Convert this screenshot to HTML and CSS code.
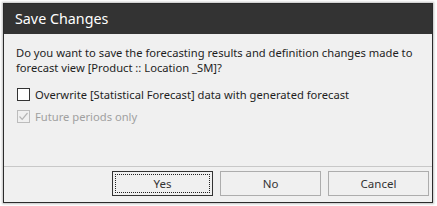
FILE: index.html
```html
<!DOCTYPE html>
<html>
<head>
<meta charset="utf-8">
<link rel="stylesheet" href="styles.css">
</head>
<body>
<div class="window">
  <div class="titlebar">Save Changes</div>
  <div class="content">
    <p class="message">Do you want to save the forecasting results and definition changes made to forecast view [Product :: Location _SM]?</p>
    <div class="option">
      <span class="box"></span>
      <span class="label">Overwrite [Statistical Forecast] data with generated forecast</span>
    </div>
    <div class="option disabled">
      <span class="box"><svg width="11" height="11" viewBox="0 0 11 11"><path d="M1.5 5.5 L4.2 8.3 L9.5 2" fill="none" stroke="#b4b4b4" stroke-width="1.2"/></svg></span>
      <span class="label">Future periods only</span>
    </div>
  </div>
  <div class="footer">
    <button class="btn default"><span class="focus">Yes</span></button>
    <button class="btn">No</button>
    <button class="btn">Cancel</button>
  </div>
</div>
</body>
</html>
```
FILE: styles.css
```css
html, body {
  margin: 0;
  padding: 0;
  background: #ffffff;
}
body {
  font-family: "Noto Sans", "Open Sans", sans-serif;
  font-size: 11.2px;
  color: #1e1e1e;
}
.window {
  margin: 3px;
  width: 430px;
  height: 200px;
  box-sizing: border-box;
  border: 1px solid #2b2b2b;
  box-shadow: 0 0 2px 1px rgba(0, 0, 0, 0.25);
  background: #f0f0f0;
  display: flex;
  flex-direction: column;
}
.titlebar {
  height: 30px;
  background: #333333;
  color: #ffffff;
  font-size: 14.3px;
  line-height: 30px;
  padding-left: 11px;
}
.content {
  flex: 1;
  padding: 11px 12px 0 12px;
}
.message {
  margin: 0;
  line-height: 15px;
}
.option {
  display: flex;
  align-items: center;
  height: 13px;
  margin-top: 13px;
  margin-left: 1px;
}
.option + .option {
  margin-top: 9px;
}
.box {
  width: 11px;
  height: 11px;
  border: 1px solid #333333;
  background: #ffffff;
  margin-right: 5px;
  display: flex;
  align-items: center;
  justify-content: center;
}
.label {
  line-height: 13px;
}
.disabled .box {
  border-color: #bcbcbc;
  background: #f0f0f0;
}
.disabled .label {
  color: #a0a0a0;
}
.footer {
  border-top: 1px solid #c8c8c8;
  padding: 4px 3px 6px 0;
  display: flex;
  justify-content: flex-end;
  gap: 7px;
}
.btn {
  width: 101px;
  height: 25px;
  box-sizing: border-box;
  border: 1px solid #adadad;
  background: #f0f0f0;
  font-family: "Noto Sans", "Open Sans", sans-serif;
  font-size: 11.5px;
  color: #333333;
  padding: 0;
  margin: 0;
}
.btn.default {
  border: 1px solid #333333;
  padding: 2px;
}
.focus {
  display: flex;
  align-items: center;
  justify-content: center;
  height: 100%;
  box-sizing: border-box;
  border: 1px dotted #222222;
}
```
